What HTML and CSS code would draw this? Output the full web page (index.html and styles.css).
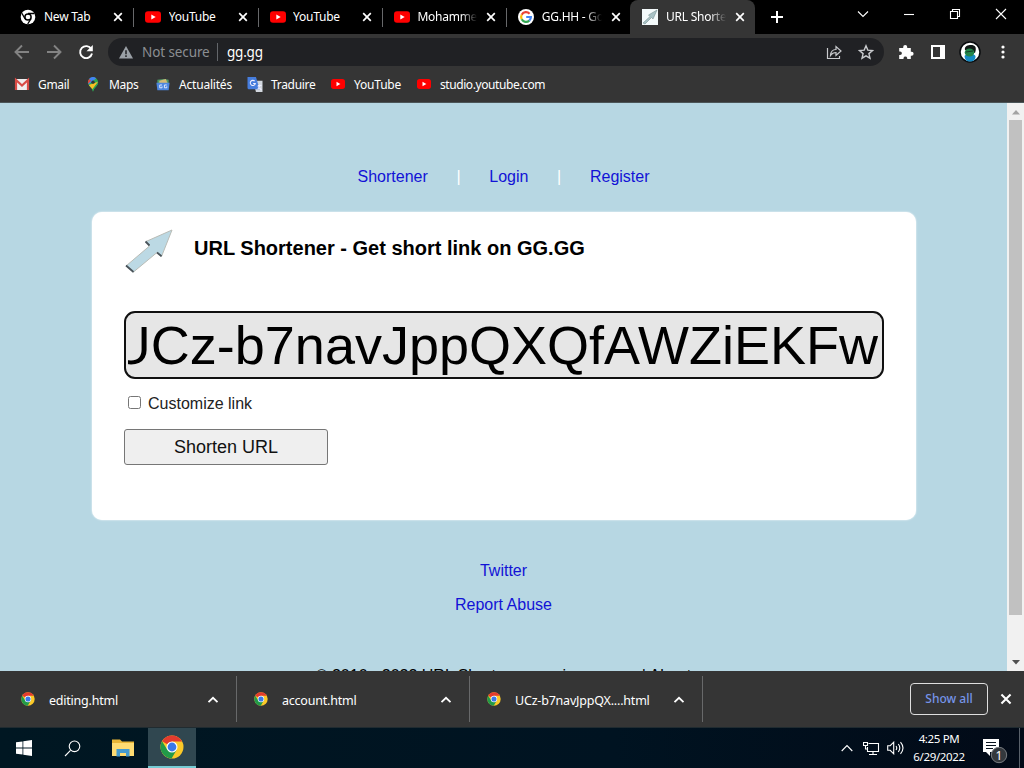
FILE: index.html
```html
<!DOCTYPE html>
<html lang="en">
<head>
<meta charset="utf-8">
<title>URL Shortener</title>
<link rel="stylesheet" href="styles.css">
</head>
<body>
<svg class="defs" width="0" height="0">
  <symbol id="yt" viewBox="0 0 16 12"><rect width="16" height="11.5" y=".2" rx="3" fill="#f00"/><path d="M6.3 3.5v5L10.7 6z" fill="#fff"/></symbol>
  <symbol id="x" viewBox="0 0 10 10"><path d="M1.2 1.2l7.6 7.6M8.8 1.2L1.2 8.8" stroke="#fff" stroke-width="1.7" fill="none"/></symbol>
  <symbol id="up" viewBox="0 0 12 8"><path d="M1.5 6.2L6 1.8l4.5 4.4" stroke="#fff" stroke-width="1.8" fill="none"/></symbol>
  <symbol id="chrome" viewBox="0 0 24 24">
    <circle cx="12" cy="12" r="11.5" fill="#fbc928"/>
    <path d="M12 12L2.04 6.25A11.5 11.5 0 0 1 21.96 6.25L22 6.6H12z" fill="#e33b2e"/>
    <path d="M2.04 6.25A11.5 11.5 0 0 0 11.6 23.5L16.7 14.7 12 12 7.3 14.7 2.04 6.25z" fill="#229a49"/>
    <circle cx="12" cy="12" r="5.5" fill="#fff"/><circle cx="12" cy="12" r="4.4" fill="#3a78e8"/>
  </symbol>
  <symbol id="arrow" viewBox="0 0 50 46"><path d="M2 37L25.500 17 22 12.500 48 1 37.500 27.500 33 23.500 9.500 43z" fill="#bcd9e4" stroke="#b9bcb6" stroke-width="1"/><path d="M2 36.500l7.500 6.500M21.500 12.500l4 4M33 23.500l4.500 3.800" stroke="#49535a" stroke-width="1.800"/></symbol>
</svg>

<header class="tabs">
  <div class="tab"><svg class="fav first" viewBox="0 0 16 16"><circle cx="8" cy="8" r="7.300" fill="#fff"/><circle cx="8" cy="8" r="3.100" fill="#fff" stroke="#000" stroke-width="1.500"/><path d="M8 4.500h6.500M5 9.700L1.900 4.300M11 9.700L7.700 15" stroke="#000" stroke-width="1.300"/></svg><span class="title">New Tab</span><svg class="close"><use href="#x"/></svg></div>
  <div class="tab sep"><svg class="fav"><use href="#yt"/></svg><span class="title">YouTube</span><svg class="close"><use href="#x"/></svg></div>
  <div class="tab sep"><svg class="fav"><use href="#yt"/></svg><span class="title">YouTube</span><svg class="close"><use href="#x"/></svg></div>
  <div class="tab sep"><svg class="fav"><use href="#yt"/></svg><span class="title fade">Mohammed</span><svg class="close"><use href="#x"/></svg></div>
  <div class="tab sep"><svg class="fav" viewBox="0 0 16 16"><circle cx="8" cy="8" r="8" fill="#fff"/><g fill="none" stroke-width="2.200"><path d="M11.600 4.700A4.900 4.900 0 0 0 3.700 5.700" stroke="#ea4335"/><path d="M3.700 5.700a4.900 4.900 0 0 0 0 4.600" stroke="#fbbc05"/><path d="M3.700 10.300A4.900 4.900 0 0 0 11.300 11.600" stroke="#34a853"/><path d="M11.300 11.600A4.900 4.900 0 0 0 12.900 8H8.200" stroke="#4285f4"/></g></svg><span class="title fade">GG.HH - Goo</span><svg class="close"><use href="#x"/></svg></div>
  <div class="tab active"><svg class="fav" viewBox="0 0 16 16"><path d="M0 0h16v16H0z" fill="#f4fafb"/><path d="M1 14L8 7.500 6.500 6 15 1l-4 9-1.500-1.500L3 15z" fill="#a9c3c6" stroke="#7b9294" stroke-width=".6"/></svg><span class="title fade">URL Shorten</span><svg class="close"><use href="#x"/></svg></div>
  <svg class="plus" viewBox="0 0 12 12"><path d="M6 0v12M0 6h12" stroke="#fff" stroke-width="2"/></svg>
  <div class="window-controls">
    <svg viewBox="0 0 12 12"><path d="M1 3.500l5 5 5-5" class="thin"/></svg>
    <svg viewBox="0 0 12 12"><path d="M1 6.500h10" class="thin"/></svg>
    <svg viewBox="0 0 12 12"><path d="M1.500 3.500h7v7h-7zM3.500 3.500v-2h7v7h-2" class="thin"/></svg>
    <svg viewBox="0 0 12 12"><path d="M1 1l10 10M11 1L1 11" class="thin"/></svg>
  </div>
</header>

<div class="toolbar">
  <svg class="nav dim" viewBox="0 0 16 16"><path d="M15 8H2M8 1.500L1.500 8 8 14.500"/></svg>
  <svg class="nav dim" viewBox="0 0 16 16"><path d="M1 8h13M8 1.500L14.500 8 8 14.500"/></svg>
  <svg class="nav" viewBox="0 0 16 16"><path d="M13.300 5A6 6 0 1 0 14 9.500"/><path d="M14.800 1v6.300H8.500z" class="solid"/></svg>
  <div class="address">
    <svg class="warn" viewBox="0 0 14 13"><path d="M7 0l7 12.500H0z" fill="#9aa0a6"/><path d="M7 4.300v4M7 9.300v1.700" stroke="#202124" stroke-width="1.500"/></svg>
    <span class="insecure">Not secure</span><span class="url">gg.gg</span>
    <svg class="share" viewBox="0 0 16 16"><path d="M1.500 4v10.500h12V12M4.500 11.500c.3-4 2.500-6 5.500-6V2.500l5 4.500-5 4.500V8.500c-2.500 0-4 .8-5.500 3z"/></svg>
    <svg class="star" viewBox="0 0 16 16"><path d="M8 1.800l1.800 4.300 4.700.4-3.600 3.100 1.100 4.600L8 11.800l-4 2.400 1.100-4.600-3.600-3.100 4.700-.4z"/></svg>
  </div>
  <svg class="ext" viewBox="0 0 16 16"><path d="M1.200 4h4V3a2 2 0 0 1 4 0v1h3.600v3.700h.8a2 2 0 0 1 0 4h-.8V15H9.200v-1a1.900 1.900 0 0 0-3.700 0v1H1.200v-4h.9a1.800 1.800 0 0 0 0-3.600h-.9z" fill="#fff"/></svg>
  <svg class="panel" viewBox="0 0 14 14"><path d="M1 1h12v12H1z" fill="none" stroke="#fff" stroke-width="2"/><path d="M9 0h5v14H9z" fill="#fff"/></svg>
  <svg class="avatar" viewBox="0 0 22 22"><circle cx="11" cy="11" r="10" fill="#fff" stroke="#080b0d" stroke-width="1.500"/><path d="M5.500 15c2-3 9-3 11 0 0 4-2 5.500-5.500 5.500S6 19 5.500 15z" fill="#158bc4"/><path d="M6 9c-1-4 3-5 6-5 4 0 6 2 4 8z" fill="#111a17"/><ellipse cx="10.500" cy="11.500" rx="4.800" ry="4" fill="#238649"/><path d="M7 11l7-1" stroke="#143b29"/></svg>
  <svg class="dots" viewBox="0 0 4 14"><circle cx="2" cy="2" r="1.600"/><circle cx="2" cy="7" r="1.600"/><circle cx="2" cy="12" r="1.600"/></svg>
</div>

<nav class="bookmarks">
  <span class="mark m1"><svg viewBox="0 0 16 14"><path d="M1 1.500h14v11H1z" fill="#f0eeee"/><path d="M2 12.500V2.500L8 8l6-5.500v10" stroke="#d84b45" stroke-width="2.200" fill="none"/></svg>Gmail</span>
  <span class="mark m2"><svg viewBox="0 0 16 16"><path d="M8 15.800C7 11 2.500 9.500 2.500 5.700A5.500 5.500 0 0 1 13.500 5.700C13.500 9.500 9 11 8 15.800z" fill="#2fa653"/><path d="M3 8L11.500 1.400A5.500 5.500 0 0 0 3.800 2z" fill="#4285f4"/><path d="M3.800 2A5.500 5.500 0 0 0 2.700 7L6 4z" fill="#e3463b"/><path d="M3.500 8.500L13.400 5l-6 8z" fill="#f8bd24"/><path d="M7.500 13l6-7.500C13 10 9 11 8 15.800z" fill="#2fa653"/><circle cx="8" cy="5.500" r="1.800" fill="#333"/></svg>Maps</span>
  <span class="mark m3"><svg viewBox="0 0 16 16"><path d="M2 3l7-1 5 1v5H2z" fill="#4f9b68"/><path d="M4 4l7-2 2 5H4z" fill="#d5ba75"/><path d="M1 6h14l-1 8H2z" fill="#4d86df"/><path d="M7 8.500H4.500v3H7v-1.500M12 8.500H9.500v3H12v-1.500" stroke="#e4edff" fill="none"/></svg>Actualités</span>
  <span class="mark m4"><svg viewBox="0 0 16 16"><path d="M6 4h10v12H9z" fill="#d2d7de"/><path d="M0 0h9l4 13H1L0 12z" fill="#467ddd"/><path d="M7.700 4.500A2.700 2.700 0 1 0 8.300 7H6M11 9h4M13 8c0 3-1 4-2 5m0-3l4 4" fill="none" stroke="#eef" stroke-width="1.100"/></svg>Traduire</span>
  <span class="mark m5"><svg class="tube"><use href="#yt"/></svg>YouTube</span>
  <span class="mark m6"><svg class="tube"><use href="#yt"/></svg>studio.youtube.com</span>
</nav>

<main class="viewport">
  <div class="page">
    <nav class="links"><a>Shortener</a><i>|</i><a>Login</a><i>|</i><a>Register</a></nav>
    <section class="card">
      <div class="heading"><svg><use href="#arrow"/></svg><h1>URL Shortener - Get short link on GG.GG</h1></div>
      <div class="field"><div class="field-clip"><span>UCz-b7navJppQXQfAWZiEKFw</span></div></div>
      <label class="custom"><span class="check"></span>Customize link</label>
      <button class="shorten">Shorten URL</button>
    </section>
    <footer class="foot"><a>Twitter</a><a>Report Abuse</a><p>© 2010 - 2022 URL Shortener service - gg.gg | About</p></footer>
  </div>
  <div class="scrollbar">
    <svg viewBox="0 0 8 5"><path d="M4 0l4 4.500H0z" fill="#a3a3a3"/></svg>
    <div class="thumb"></div>
    <svg viewBox="0 0 8 5"><path d="M4 4.500L8 0H0z" fill="#505050"/></svg>
  </div>
</main>

<div class="downloads">
  <div class="item"><svg class="logo"><use href="#chrome"/></svg><span>editing.html</span><svg class="chev"><use href="#up"/></svg></div>
  <div class="item"><svg class="logo"><use href="#chrome"/></svg><span>account.html</span><svg class="chev"><use href="#up"/></svg></div>
  <div class="item"><svg class="logo"><use href="#chrome"/></svg><span class="long">UCz-b7navJppQX....html</span><svg class="chev"><use href="#up"/></svg></div>
  <div class="show">Show all</div>
  <svg class="dismiss"><use href="#x"/></svg>
</div>

<div class="taskbar">
  <div class="app"><svg width="16" height="16" viewBox="0 0 16 16"><path d="M0 2.300l6.500-.9v6.100H0zM7.300 1.300L16 0v7.500H7.300zM0 8.400h6.500v6.200L0 13.700zM7.300 8.400H16V16l-8.700-1.200z" fill="#fff"/></svg></div>
  <div class="app"><svg width="17" height="17" viewBox="0 0 17 17"><circle cx="10.500" cy="6.300" r="5.300" class="thin"/><path d="M6.500 10.300L1 16" class="thin"/></svg></div>
  <div class="app folder"><svg width="22" height="18" viewBox="0 0 22 18"><path d="M0 .5h8l2 2h12V17H0z" fill="#e9b637"/><path d="M0 4h22v13H0z" fill="#ffdc72"/><path d="M4.500 17.500V10h13v7.500h-3.500V14H8v3.500z" fill="#459bcf"/></svg></div>
  <div class="app current"><svg width="24" height="24"><use href="#chrome"/></svg></div>
  <div class="tray">
    <svg width="12" height="8" viewBox="0 0 12 8"><path d="M.7 7L6 1.500 11.300 7" class="thin"/></svg>
    <svg class="net" width="17" height="15" viewBox="0 0 17 15"><path d="M5.500 2.500h10v8h-11V6M10 11v3M6 13.500h8M.5 1.500h4v3h-4zM2.500 5v3h2" class="thin"/></svg>
    <svg class="sound" width="17" height="14" viewBox="0 0 17 14"><path d="M.7 4.700h2.500l3.500-3.500v11.600L3.200 9.300H.7zM9 5q1.500 2 0 4M11.300 3q3 4 0 8M13.500 1.200q5 5.800 0 11.600" class="thin"/></svg>
    <div class="clock">4:25 PM<br>6/29/2022</div>
    <svg class="notice" width="26" height="26" viewBox="0 0 26 26"><path d="M1 1h16v13H8v4l-4-4H1z" fill="#fff"/><path d="M4 4.500h10M4 7.500h10M4 10.500h7" stroke="#0a1420"/><circle cx="17" cy="17" r="7.700" fill="#34383d" stroke="#777b80"/><text x="13.500" y="21.500" class="count">1</text></svg>
    <div class="peek"></div>
  </div>
</div>
</body>
</html>
```
FILE: styles.css
```css
* { box-sizing: border-box; }
body { margin: 0; width: 1024px; height: 768px; overflow: hidden; background: #000; color: #fff; font: 12px "Noto Sans", sans-serif; display: flex; flex-direction: column; }
svg { display: block; flex: none; }
.defs { position: absolute; }
.thin { fill: none; stroke: #fff; stroke-width: 1.1; }

.tabs { height: 34px; flex: none; display: flex; align-items: center; padding-left: 9px; background: #000; }
.tab { width: 124.300px; height: 34px; display: flex; align-items: center; padding-left: 12px; flex: none; }
.tab.sep { background: linear-gradient(#67686a, #67686a) 0 8px / 1px 19px no-repeat; }
.tab.active { background: #353535; border-radius: 8px 8px 0 0; }
.fav { width: 16px; height: 16px; margin-right: 7.500px; }
.fav.first { margin-left: -1px; margin-right: 8px; }
.title { width: 60px; white-space: nowrap; overflow: hidden; font-size: 12px; letter-spacing: -.25px; line-height: 16px; padding-bottom: 1px; }
.fade { -webkit-mask-image: linear-gradient(90deg, #000 44px, transparent 60px); mask-image: linear-gradient(90deg, #000 44px, transparent 60px); }
.close { width: 10px; height: 10px; margin-left: 9px; }
.plus { width: 12px; height: 12px; margin-left: 16px; }
.window-controls { display: flex; gap: 34px; margin-left: 74.500px; height: 28px; align-items: center; align-self: flex-start; }
.window-controls svg { width: 12px; height: 12px; }

.toolbar { height: 36px; flex: none; background: #353535; display: flex; align-items: center; padding-left: 14px; }
.nav { width: 16px; height: 16px; margin-right: 16px; fill: none; stroke: #fff; stroke-width: 1.900; }
.nav.dim { stroke: #838383; }
.nav .solid { fill: #fff; stroke: none; }
.address { width: 776px; height: 28px; margin-left: -2px; border-radius: 14px; background: #202124; display: flex; align-items: center; padding-left: 11px; font-size: 14px; }
.warn { width: 14px; height: 13px; margin-right: 9px; }
.insecure { width: 76px; height: 18px; line-height: 18px; color: #8b8e92; border-right: 1px solid #63666a; white-space: nowrap; font-size: 13.500px; letter-spacing: -.1px; }
.url { margin-left: 9px; line-height: 18px; font-size: 13.500px; letter-spacing: -.2px; }
.share, .star { width: 16px; height: 16px; fill: none; stroke: #c9cbce; stroke-width: 1.200; }
.share { margin-left: auto; }
.star { margin: 0 10px 0 16px; stroke-width: 1.400; }
.ext { width: 16px; height: 16px; margin-left: 14px; }
.panel { width: 14px; height: 14px; margin-left: 17px; }
.avatar { width: 22px; height: 22px; margin-left: 14px; }
.dots { width: 4px; height: 14px; margin-left: 20px; fill: #fff; }

.bookmarks { height: 33px; flex: none; background: #353535; display: flex; align-items: center; padding: 0 0 4px 14px; border-bottom: 1px solid #4b5558; letter-spacing: -.3px; }
.mark { display: flex; align-items: center; white-space: nowrap; }
.mark svg { width: 16px; height: 15px; margin-right: 8px; }
.mark .tube { width: 14px; height: 14px; margin: 0 9px 0 1px; }
.m1 { width: 71px; }
.m2 { width: 70px; }
.m3 { width: 92px; letter-spacing: -.2px; }
.m4 { width: 83px; }
.m5 { width: 86px; letter-spacing: -.2px; }
.m6 { letter-spacing: -.42px; }

.viewport { height: 568px; flex: none; display: flex; background: #b7d7e3; font-family: "Liberation Sans", sans-serif; font-size: 16px; }
.page { width: 1007px; height: 568px; overflow: hidden; color: #000; }
.links { height: 108px; padding-top: 65px; display: flex; justify-content: center; line-height: 18px; }
.links a, .foot a { color: #1212d6; }
.links i { width: 61.500px; text-align: center; font-style: normal; color: #fff; }
.card { width: 824px; height: 308px; margin: 1px 0 0 92px; padding: 17px 32px 0; border-radius: 10px; background: #fff; box-shadow: 0 0 2px #fff; }
.heading { display: flex; height: 82px; }
.heading svg { width: 50px; height: 46px; margin-right: 20px; }
h1 { margin: 6px 0 0; font-size: 20px; line-height: 26px; white-space: nowrap; }
.field { width: 760px; height: 68px; border: 2px solid #101010; border-radius: 11px; background: #e6e6e6; padding: 0 4px 0 2px; }
.field-clip { height: 64px; overflow: hidden; display: flex; justify-content: flex-end; font-size: 54px; line-height: 64px; white-space: nowrap; }
.custom { height: 50px; display: flex; align-items: center; padding-left: 4px; color: #222; }
.check { width: 13px; height: 13px; border: 1px solid #767676; border-radius: 2.500px; background: #fff; margin-right: 7px; margin-top: -3px; }
.shorten { display: block; width: 204px; height: 36px; border: 1px solid #767676; border-radius: 3px; background: #efefef; font: 18px "Liberation Sans", sans-serif; color: #111; padding: 0; }
.foot { padding-top: 34px; display: flex; flex-direction: column; align-items: center; line-height: 34px; }
.foot p { margin: 37px 0 0; white-space: nowrap; }
.scrollbar { width: 17px; background: #f1f1f1; display: flex; flex-direction: column; align-items: center; justify-content: space-between; padding: 7px 0 6px; }
.scrollbar svg { width: 8px; height: 5px; }
.thumb { width: 13px; height: 495px; background: #c1c1c1; margin-bottom: 40px; }

.downloads { height: 57px; flex: none; background: #353535; border-bottom: 1px solid #202b30; display: flex; align-items: center; font-size: 12.500px; }
.item { width: 233px; height: 46px; border-right: 1px solid #68696a; display: flex; align-items: center; padding: 0 17px; white-space: nowrap; }
.item:first-child { width: 237px; padding-left: 21px; }
.logo { width: 14px; height: 14px; margin-right: 14px; }
.item span { letter-spacing: -.22px; padding-top: 2px; }
.item .long { letter-spacing: -.2px; }
.chev { width: 12px; height: 8px; margin-left: auto; margin-top: 2px; }
.show { width: 78px; height: 32px; margin-left: 207px; border: 1px solid #dedede; border-radius: 4px; text-align: center; line-height: 30px; color: #7694e8; font-size: 12px; font-weight: 500; }
.dismiss { width: 12px; height: 12px; margin-left: 12px; }

.taskbar { height: 40px; flex: none; display: flex; background: linear-gradient(90deg, #001722, #001321 60%, #020a17); }
.app { width: 48px; height: 40px; display: flex; align-items: center; justify-content: center; }
.folder { width: 52px; padding-left: 2px; }
.current { background: #304750; border-bottom: 2px solid #76cbd3; }
.tray { margin-left: auto; display: flex; align-items: center; }
.net { margin-left: 10px; }
.sound { margin-left: 7px; }
.clock { width: 62px; margin-left: 4px; text-align: center; line-height: 18px; font-size: 11.500px; letter-spacing: -.35px; white-space: nowrap; }
.notice { margin: 5px 0 0 12px; }
.count { fill: #fff; font: 12px "Noto Sans", sans-serif; }
.peek { width: 1px; height: 40px; background: #59616a; margin: 0 4px 0 11px; }
```
